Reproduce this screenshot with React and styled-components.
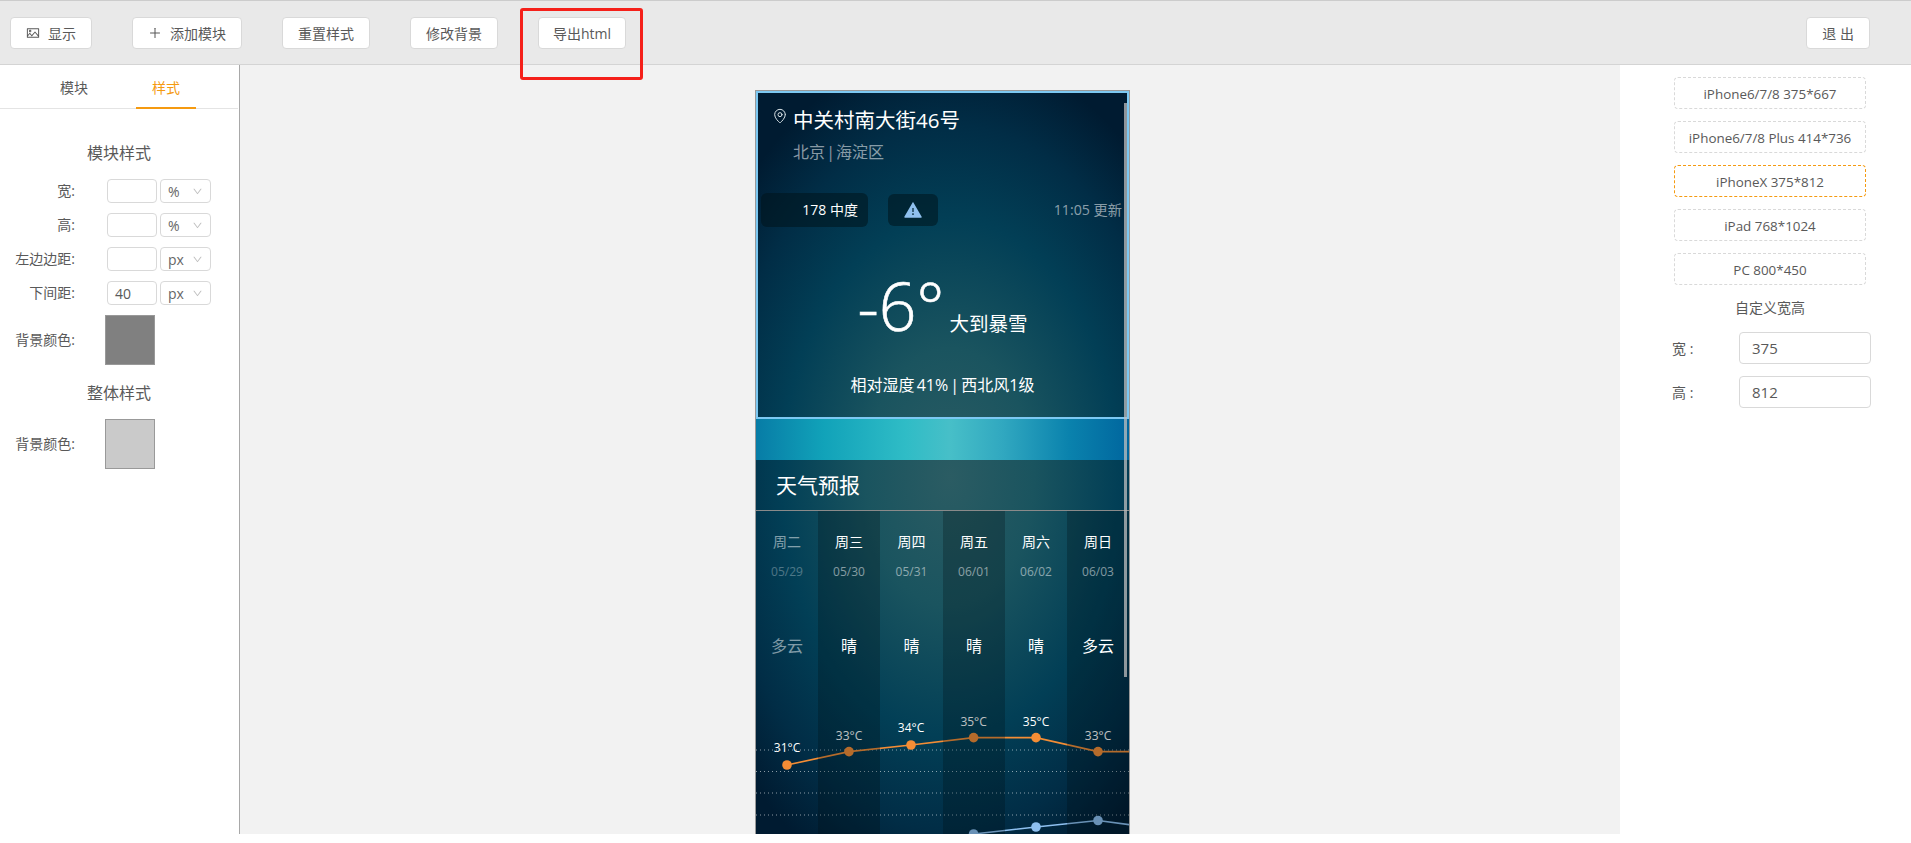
import React from 'react'
import styled, { createGlobalStyle } from 'styled-components'
import { AiFillWarning, AiOutlineDown, AiOutlinePicture, AiOutlinePlus } from 'react-icons/ai'
import { MapPin } from 'lucide-react'

const FONT = '"Open Sans", "Noto Sans CJK SC", sans-serif'

const DAYS = [
  { day: '周二', date: '05/29', weather: '多云', past: true },
  { day: '周三', date: '05/30', weather: '晴' },
  { day: '周四', date: '05/31', weather: '晴' },
  { day: '周五', date: '06/01', weather: '晴' },
  { day: '周六', date: '06/02', weather: '晴' },
  { day: '周日', date: '06/03', weather: '多云' },
]

const HIGHS = [
  { x: 31, y: 254, label: '31°C', labelY: 241 },
  { x: 93, y: 240.6, label: '33°C', labelY: 229 },
  { x: 155, y: 234, label: '34°C', labelY: 221 },
  { x: 217.6, y: 226.6, label: '35°C', labelY: 215 },
  { x: 280, y: 226.6, label: '35°C', labelY: 215 },
  { x: 342, y: 240.6, label: '33°C', labelY: 229 },
]

const LOWS = [
  { x: 217.6, y: 323 },
  { x: 280, y: 316 },
  { x: 342, y: 309.5 },
]

const DEVICES = [
  { name: 'iPhone6/7/8 375*667' },
  { name: 'iPhone6/7/8 Plus 414*736' },
  { name: 'iPhoneX 375*812', active: true },
  { name: 'iPad 768*1024' },
  { name: 'PC 800*450' },
]

const SIZE_ROWS = [
  { label: '宽:', value: '', unit: '%' },
  { label: '高:', value: '', unit: '%' },
  { label: '左边边距:', value: '', unit: 'px' },
  { label: '下间距:', value: '40', unit: 'px' },
]

const GlobalStyle = createGlobalStyle`
  html, body {
    margin: 0;
    padding: 0;
    background: #fff;
    font-family: ${FONT};
    color: #595959;
  }
  * {
    box-sizing: border-box;
  }
`

const Page = styled.div`
  height: 834px;
  display: flex;
  flex-direction: column;
  overflow: hidden;
`

const Toolbar = styled.header`
  position: relative;
  flex: 0 0 65px;
  display: flex;
  align-items: center;
  gap: 40px;
  padding: 0 41px 0 10px;
  background: #e9e9e9;
  border-top: 1px solid #ccc;
  border-bottom: 1px solid #d4d4d4;
`

const ToolButton = styled.button`
  height: 32px;
  display: inline-flex;
  align-items: center;
  justify-content: center;
  gap: 8px;
  padding: 0 ${(p) => (p.$tight ? 14 : 15)}px;
  margin-left: ${(p) => (p.$pushed ? 'auto' : '0')};
  background: #fff;
  border: 1px solid #d9d9d9;
  border-radius: 4px;
  font: 14px ${FONT};
  color: #595959;
`

const Highlight = styled.div`
  position: absolute;
  left: 520px;
  top: 7px;
  width: 123px;
  height: 72px;
  border: 3px solid #f5201a;
  border-radius: 3px;
`

const Body = styled.div`
  flex: 1;
  min-height: 0;
  display: flex;
`

const Sidebar = styled.aside`
  flex: 0 0 240px;
  background: #fff;
  border-right: 1px solid #a8a8a8;
`

const Tabs = styled.div`
  height: 44px;
  display: flex;
  padding-left: 44px;
  gap: 32px;
  border-bottom: 1px solid #e4e4e4;
  margin-right: 1px;
`

const Tab = styled.div`
  width: 60px;
  height: 44px;
  line-height: 46px;
  text-align: center;
  font-size: 14px;
  color: ${(p) => (p.$active ? '#f59a10' : '#595959')};
  border-bottom: 2px solid ${(p) => (p.$active ? '#f59a10' : 'transparent')};
`

const SectionTitle = styled.div`
  width: 238px;
  height: 24px;
  line-height: 24px;
  margin-top: ${(p) => p.$top || 0}px;
  text-align: center;
  font-size: 16px;
  color: #595959;
`

const StyleForm = styled.div`
  padding-top: 32px;
`

const FormRows = styled.div`
  display: flex;
  flex-direction: column;
  gap: 10px;
  margin-top: 14px;
`

const FormRow = styled.div`
  display: flex;
  align-items: center;
  height: 24px;
`

const FormLabel = styled.label`
  width: 75px;
  margin-bottom: 2px;
  text-align: right;
  font-size: 14px;
  white-space: nowrap;
  color: #595959;
`

const SmallInput = styled.div`
  width: 50px;
  height: 24px;
  margin-left: 32px;
  padding-left: 7px;
  line-height: 24px;
  font-size: 14px;
  border: 1px solid #d9d9d9;
  border-radius: 4px;
`

const UnitSelect = styled.div`
  width: 51px;
  height: 24px;
  margin-left: 3px;
  padding: 0 7px;
  display: flex;
  align-items: center;
  justify-content: space-between;
  font-size: 14px;
  border: 1px solid #d9d9d9;
  border-radius: 4px;
  color: #666;
  svg {
    color: #bfbfbf;
  }
`

const ColorRow = styled.div`
  display: flex;
  align-items: center;
  margin-top: ${(p) => p.$top}px;
`

const Swatch = styled.div`
  width: 50px;
  height: 50px;
  margin-left: 30px;
  background: ${(p) => p.$color};
  border: 1px solid #999;
`

const Canvas = styled.main`
  flex: 1;
  min-width: 0;
  padding: 25px 0 0 515px;
  background: #f2f2f2;
  overflow: hidden;
`

const Phone = styled.div`
  position: relative;
  width: 375px;
  height: 760px;
  border: 1px solid #999;
  color: #fff;
  background: radial-gradient(
    ellipse 280px 430px at 52% 51%,
    #2b5c63 0%,
    #1a545f 30%,
    #023f56 60%,
    #012d46 82%,
    #001b31 100%
  );
`

const Scrollbar = styled.div`
  position: absolute;
  top: 12px;
  right: 2px;
  width: 3px;
  height: 574px;
  background: rgba(190, 190, 190, 0.75);
  z-index: 3;
`

const WeatherHead = styled.section`
  height: 328px;
  border: 2px solid #7cc8f2;
  padding-top: 12px;
`

const AddressRow = styled.div`
  display: flex;
  align-items: center;
  gap: 5px;
  height: 28px;
  padding-left: 14px;
  font-size: 20.5px;
  svg {
    margin-bottom: 6px;
    color: #d8e2e6;
  }
`

const District = styled.div`
  height: 24px;
  line-height: 24px;
  margin-top: 7px;
  padding-left: 35px;
  font-size: 16px;
  word-spacing: -3px;
  color: rgba(255, 255, 255, 0.55);
`

const StatusRow = styled.div`
  display: flex;
  align-items: center;
  height: 34px;
  margin-top: 29px;
  padding: 0 5px 0 3px;
`

const AqiChip = styled.div`
  width: 107px;
  height: 34px;
  line-height: 34px;
  padding-right: 10px;
  text-align: right;
  font-size: 14px;
  border-radius: 6px;
  background: rgba(0, 20, 28, 0.55);
`

const AlertChip = styled.div`
  width: 50px;
  height: 32px;
  margin-left: 20px;
  display: flex;
  align-items: center;
  justify-content: center;
  border-radius: 6px;
  color: #8fc0ee;
  background: rgba(0, 20, 28, 0.55);
`

const UpdateTime = styled.div`
  margin-left: auto;
  margin-bottom: 2px;
  font-size: 14.2px;
  color: rgba(255, 255, 255, 0.55);
`

const TempRow = styled.div`
  display: flex;
  justify-content: center;
  align-items: baseline;
  gap: 5px;
  height: 80px;
  line-height: 80px;
  margin-top: 38px;
`

const Temp = styled.div`
  font-size: 66px;
  font-weight: 300;
  -webkit-text-stroke: 0.6px #fff;
`

const Condition = styled.div`
  font-size: 19.5px;
  line-height: 24px;
`

const Humidity = styled.div`
  height: 22px;
  line-height: 22px;
  margin-top: 29px;
  text-align: center;
  font-size: 16px;
  word-spacing: -2px;
`

const Band = styled.div`
  height: 41px;
  background: linear-gradient(
    90deg,
    #077ca6 0%,
    #11a2b9 18%,
    #2fbcc6 40%,
    #47bfc8 52%,
    #31a8c0 66%,
    #0a82ad 84%,
    #00669e 100%
  );
`

const ForecastTitle = styled.div`
  height: 51px;
  line-height: 50px;
  padding-left: 20px;
  font-size: 21px;
  border-bottom: 1px solid #8a8a8a;
`

const Forecast = styled.div`
  position: relative;
  display: grid;
  grid-template-columns: 62px 62px 63px 62px 62px 62px;
  height: 323px;
`

const Chart = styled.svg`
  position: absolute;
  left: 0;
  top: 0;
`

const DayColumn = styled.div`
  position: relative;
  display: flex;
  flex-direction: column;
  align-items: center;
  padding-top: 21px;
  background: ${(p) => (p.$shade ? 'rgba(0, 10, 16, 0.26)' : 'transparent')};
`

const DayName = styled.div`
  height: 20px;
  line-height: 20px;
  font-size: 14px;
  opacity: ${(p) => (p.$past ? 0.5 : 1)};
`

const DayDate = styled.div`
  height: 20px;
  line-height: 20px;
  margin-top: 10px;
  font-size: 12px;
  color: rgba(255, 255, 255, 0.5);
  opacity: ${(p) => (p.$past ? 0.6 : 1)};
`

const DayWeather = styled.div`
  height: 24px;
  line-height: 24px;
  margin-top: 52px;
  font-size: 16px;
  opacity: ${(p) => (p.$past ? 0.5 : 1)};
`

const DevicePanel = styled.aside`
  flex: 0 0 291px;
  padding: 12px 0 0 54px;
  background: #fff;
`

const DeviceButton = styled.div`
  width: 192px;
  height: 32px;
  line-height: 32px;
  margin-bottom: 12px;
  text-align: center;
  font-size: 13.4px;
  border: 1px dashed ${(p) => (p.$active ? '#f59a10' : '#d9d9d9')};
  border-radius: 4px;
`

const CustomTitle = styled.div`
  width: 192px;
  height: 22px;
  line-height: 22px;
  margin-top: 4px;
  text-align: center;
  font-size: 14px;
`

const SizeRow = styled.div`
  display: flex;
  align-items: center;
  height: 32px;
  margin-top: ${(p) => p.$top}px;
  margin-left: -2px;
  font-size: 14px;
`

const SizeLabel = styled.label`
  width: 67px;
`

const SizeInput = styled.div`
  width: 132px;
  height: 32px;
  line-height: 30px;
  padding-left: 12px;
  font-size: 15px;
  border: 1px solid #d9d9d9;
  border-radius: 4px;
`

function ForecastChart() {
  const highPath = [...HIGHS.map((p) => `${p.x},${p.y}`), '376,240.6'].join(' ')
  const lowPath = ['203,325', ...LOWS.map((p) => `${p.x},${p.y}`), '376,314'].join(' ')
  return (
    <Chart width="373" height="323" viewBox="0 0 373 323">
      {[239, 260.5, 282, 304].map((y) => (
        <line
          key={y}
          x1="0"
          x2="373"
          y1={y}
          y2={y}
          stroke="rgba(255,255,255,0.55)"
          strokeDasharray="1 3"
        />
      ))}
      <polyline points={highPath} fill="none" stroke="#f48d35" strokeWidth="1.6" />
      <polyline points={lowPath} fill="none" stroke="#8ec0f0" strokeWidth="1.6" />
      {HIGHS.map((p) => (
        <g key={p.x}>
          <circle cx={p.x} cy={p.y} r="4.8" fill="#f48d35" />
          <text
            x={p.x}
            y={p.labelY}
            fill="#fff"
            fontSize="12"
            fontFamily={FONT}
            textAnchor="middle"
          >
            {p.label}
          </text>
        </g>
      ))}
      {LOWS.map((p) => (
        <circle key={p.x} cx={p.x} cy={p.y} r="4.8" fill="#8ec0f0" />
      ))}
    </Chart>
  )
}

export default function App() {
  return (
    <Page>
      <GlobalStyle />
      <Toolbar>
        <ToolButton>
          <AiOutlinePicture size={14} />
          显示
        </ToolButton>
        <ToolButton>
          <AiOutlinePlus size={14} />
          添加模块
        </ToolButton>
        <ToolButton>重置样式</ToolButton>
        <ToolButton>修改背景</ToolButton>
        <ToolButton $tight>导出html</ToolButton>
        <ToolButton $pushed>退 出</ToolButton>
        <Highlight />
      </Toolbar>
      <Body>
        <Sidebar>
          <Tabs>
            <Tab>模块</Tab>
            <Tab $active>样式</Tab>
          </Tabs>
          <StyleForm>
            <SectionTitle>模块样式</SectionTitle>
            <FormRows>
              {SIZE_ROWS.map((row) => (
                <FormRow key={row.label}>
                  <FormLabel>{row.label}</FormLabel>
                  <SmallInput>{row.value}</SmallInput>
                  <UnitSelect>
                    {row.unit}
                    <AiOutlineDown size={11} />
                  </UnitSelect>
                </FormRow>
              ))}
            </FormRows>
            <ColorRow $top={10}>
              <FormLabel>背景颜色:</FormLabel>
              <Swatch $color="#808080" />
            </ColorRow>
            <SectionTitle $top={16}>整体样式</SectionTitle>
            <ColorRow $top={14}>
              <FormLabel>背景颜色:</FormLabel>
              <Swatch $color="#cacaca" />
            </ColorRow>
          </StyleForm>
        </Sidebar>
        <Canvas>
          <Phone>
            <Scrollbar />
            <WeatherHead>
              <AddressRow>
                <MapPin size={16} strokeWidth={1.5} />
                中关村南大街46号
              </AddressRow>
              <District>北京 | 海淀区</District>
              <StatusRow>
                <AqiChip>178 中度</AqiChip>
                <AlertChip>
                  <AiFillWarning size={20} />
                </AlertChip>
                <UpdateTime>11:05 更新</UpdateTime>
              </StatusRow>
              <TempRow>
                <Temp>-6°</Temp>
                <Condition>大到暴雪</Condition>
              </TempRow>
              <Humidity>相对湿度 41% | 西北风1级</Humidity>
            </WeatherHead>
            <Band />
            <ForecastTitle>天气预报</ForecastTitle>
            <Forecast>
              <ForecastChart />
              {DAYS.map((d, i) => (
                <DayColumn key={d.day} $shade={i % 2 === 1}>
                  <DayName $past={d.past}>{d.day}</DayName>
                  <DayDate $past={d.past}>{d.date}</DayDate>
                  <DayWeather $past={d.past}>{d.weather}</DayWeather>
                </DayColumn>
              ))}
            </Forecast>
          </Phone>
        </Canvas>
        <DevicePanel>
          {DEVICES.map((d) => (
            <DeviceButton key={d.name} $active={d.active}>
              {d.name}
            </DeviceButton>
          ))}
          <CustomTitle>自定义宽高</CustomTitle>
          <SizeRow $top={13}>
            <SizeLabel>宽 :</SizeLabel>
            <SizeInput>375</SizeInput>
          </SizeRow>
          <SizeRow $top={12}>
            <SizeLabel>高 :</SizeLabel>
            <SizeInput>812</SizeInput>
          </SizeRow>
        </DevicePanel>
      </Body>
    </Page>
  )
}
